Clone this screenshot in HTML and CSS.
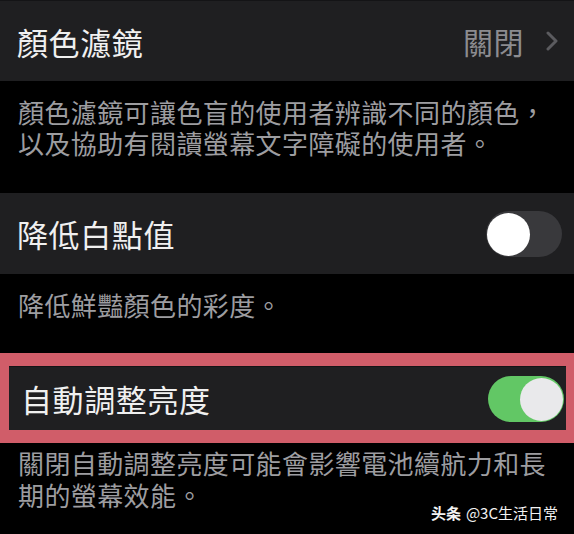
FILE: index.html
```html
<!DOCTYPE html>
<html lang="zh-Hant">
<head>
    <meta charset="UTF-8">
    <meta name="viewport" content="width=device-width, initial-scale=1.0">
    <title>輔助使用 - 顯示器與文字大小</title>
    <link rel="stylesheet" href="styles.css">
</head>
<body>
    <div class="screen">
        <div class="row">
            <span class="label">顏色濾鏡</span>
            <span class="value">
                關閉
                <svg class="chevron" width="12" height="20" viewBox="0 0 12 20">
                    <polyline points="2,2 10,10 2,18" fill="none" stroke="#5b5b5f" stroke-width="3" stroke-linecap="round" stroke-linejoin="round"/>
                </svg>
            </span>
        </div>
        <p class="desc">顏色濾鏡可讓色盲的使用者辨識不同的顏色，以及協助有閱讀螢幕文字障礙的使用者。</p>

        <div class="row">
            <span class="label">降低白點值</span>
            <span class="switch"><span class="knob"></span></span>
        </div>
        <p class="desc short">降低鮮豔顏色的彩度。</p>

        <div class="highlight">
            <div class="row inner">
                <span class="label">自動調整亮度</span>
                <span class="switch on"><span class="knob"></span></span>
            </div>
        </div>
        <p class="desc last">關閉自動調整亮度可能會影響電池續航力和長<br>期的螢幕效能。</p>

        <div class="watermark">
            <span class="brand">头条</span>
            <span>@3C生活日常</span>
        </div>
    </div>
</body>
</html>
```

FILE: styles.css
```css
body {
    margin: 0;
    background-color: #000;
    font-family: "Noto Sans CJK TC", "Noto Sans", sans-serif;
}
.screen {
    position: relative;
    width: 574px;
    height: 534px;
    overflow: hidden;
    background-color: #000;
}
.row {
    display: flex;
    align-items: center;
    justify-content: space-between;
    height: 81px;
    padding: 0 12px 0 17px;
    background-color: #1f1f21;
}
.row:first-child {
    border-top: 1px solid #141416;
    height: 80px;
}
.label {
    color: #f0f0f0;
    font-size: 31px;
    letter-spacing: 0.6px;
}
.value {
    display: flex;
    align-items: center;
    gap: 22px;
    color: #8c8c90;
    font-size: 30px;
    letter-spacing: 0.5px;
    padding-right: 4px;
}
.chevron {
    display: block;
}
.desc {
    margin: 0;
    padding: 15px 24px 35px 18px;
    color: #9d9da0;
    font-size: 26px;
    letter-spacing: 0.4px;
    line-height: 31px;
}
.desc.short {
    padding-bottom: 33px;
}
.desc.last {
    padding-top: 4px;
    padding-bottom: 0;
    line-height: 32px;
}
.switch {
    position: relative;
    display: inline-block;
    width: 76px;
    height: 46px;
    border-radius: 23px;
    background-color: #39393c;
}
.knob {
    position: absolute;
    top: 2px;
    left: 1px;
    width: 43px;
    height: 43px;
    border-radius: 50%;
    background-color: #fff;
}
.switch.on {
    background-color: #62c765;
}
.switch.on .knob {
    left: auto;
    right: 1px;
    background-color: #e9e9eb;
}
.highlight {
    border-style: solid;
    border-color: #d05d69;
    border-width: 13px 8px 13px 9px;
}
.row.inner {
    height: 63px;
    padding: 0 2px 0 12px;
}
.watermark {
    position: absolute;
    right: 16px;
    bottom: 12px;
    display: flex;
    gap: 5px;
    color: #f2f2f2;
    font-family: "Noto Sans CJK SC", "Noto Sans", sans-serif;
    font-size: 15px;
    line-height: 18px;
}
.brand {
    font-weight: 700;
}
```
